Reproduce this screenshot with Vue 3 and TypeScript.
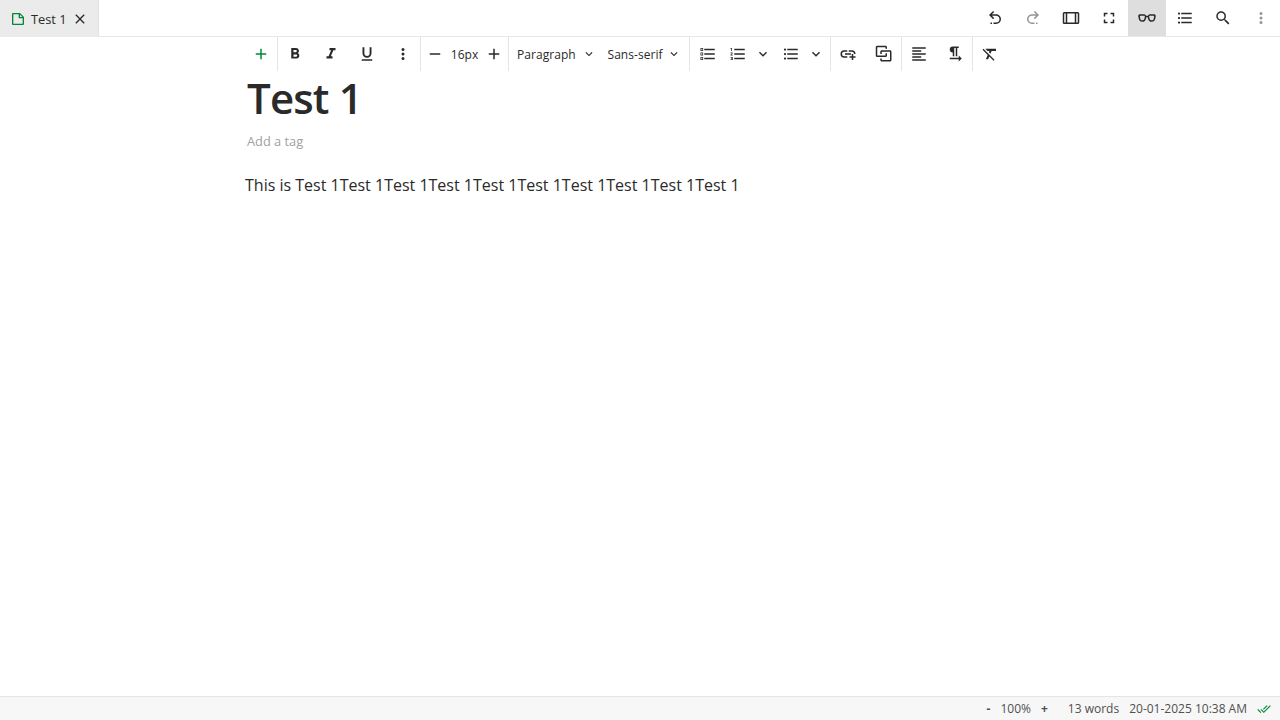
<script setup lang="ts">
import { defineComponent, h } from 'vue'

const icons: Record<string, string> = {
  note: 'M3,4.5A1.5,1.5 0 0,1 4.5,3H15L21,9V19.5A1.5,1.5 0 0,1 19.5,21H4.5A1.5,1.5 0 0,1 3,19.5V4.5M5,5V19H19V11H13V5H5M15,5.5V9H18.5L15,5.5Z',
  close: 'M19,6.41L17.59,5L12,10.59L6.41,5L5,6.41L10.59,12L5,17.59L6.41,19L12,13.41L17.59,19L19,17.59L13.41,12L19,6.41Z',
  undo: 'M13.5,7A6.5,6.5 0 0,1 20,13.5A6.5,6.5 0 0,1 13.5,20H10V18H13.5C16,18 18,16 18,13.5C18,11 16,9 13.5,9H7.83L10.91,12.09L9.5,13.5L4,8L9.5,2.5L10.92,3.91L7.83,7H13.5M6,18H8V20H6V18Z',
  redo: 'M10.5,7A6.5,6.5 0 0,0 4,13.5A6.5,6.5 0 0,0 10.5,20H14V18H10.5C8,18 6,16 6,13.5C6,11 8,9 10.5,9H16.17L13.09,12.09L14.5,13.5L20,8L14.5,2.5L13.08,3.91L16.17,7H10.5M18,18H16V20H18V18Z',
  width: 'M3,4H21A2,2 0 0,1 23,6V18A2,2 0 0,1 21,20H3A2,2 0 0,1 1,18V6A2,2 0 0,1 3,4M3,6V18H5V6H3M7,6V18H17V6H7M19,6V18H21V6H19Z',
  fullscreen: 'M5,5H10V7H7V10H5V5M14,5H19V10H17V7H14V5M17,14H19V19H14V17H17V14M10,17V19H5V14H7V17H10Z',
  glasses: 'M3,7C1.5,7 .3,7.8 .3,9.5L1,13C1.5,15.7 3,17 5.7,17C8.5,17 10,15.5 10.7,12.5L11,11.2C11.5,10.8 12.5,10.8 13,11.2L13.3,12.5C14,15.5 15.5,17 18.3,17C21,17 22.5,15.7 23,13L23.7,9.5C23.7,7.8 22.5,7 21,7H16.2C14.8,7 13.7,7.8 13.2,9C12.4,8.8 11.6,8.8 10.8,9C10.3,7.8 9.2,7 7.8,7H3M3.2,9H8C9,9 9.2,9.6 9.1,10.3L8.7,12.3C8.2,14.3 7.5,15 5.7,15C4,15 3.3,14.3 3,12.5L2.5,9.8C2.4,9.3 2.7,9 3.2,9M16,9H20.8C21.3,9 21.6,9.3 21.5,9.8L21,12.5C20.7,14.3 20,15 18.3,15C16.5,15 15.8,14.3 15.3,12.3L14.9,10.3C14.8,9.6 15,9 16,9Z',
  bullets: 'M7,5H21V7H7V5M7,13V11H21V13H7M4,4.5A1.5,1.5 0 0,1 5.5,6A1.5,1.5 0 0,1 4,7.5A1.5,1.5 0 0,1 2.5,6A1.5,1.5 0 0,1 4,4.5M4,10.5A1.5,1.5 0 0,1 5.5,12A1.5,1.5 0 0,1 4,13.5A1.5,1.5 0 0,1 2.5,12A1.5,1.5 0 0,1 4,10.5M7,19V17H21V19H7M4,16.5A1.5,1.5 0 0,1 5.5,18A1.5,1.5 0 0,1 4,19.5A1.5,1.5 0 0,1 2.5,18A1.5,1.5 0 0,1 4,16.5Z',
  search: 'M9.5,3A6.5,6.5 0 0,1 16,9.5C16,11.11 15.41,12.59 14.44,13.73L14.71,14H15.5L20.5,19L19,20.5L14,15.5V14.71L13.73,14.44C12.59,15.41 11.11,16 9.5,16A6.5,6.5 0 0,1 3,9.5A6.5,6.5 0 0,1 9.5,3M9.5,5C7,5 5,7 5,9.5C5,12 7,14 9.5,14C12,14 14,12 14,9.5C14,7 12,5 9.5,5Z',
  dots: 'M12,16A2,2 0 0,1 14,18A2,2 0 0,1 12,20A2,2 0 0,1 10,18A2,2 0 0,1 12,16M12,10A2,2 0 0,1 14,12A2,2 0 0,1 12,14A2,2 0 0,1 10,12A2,2 0 0,1 12,10M12,4A2,2 0 0,1 14,6A2,2 0 0,1 12,8A2,2 0 0,1 10,6A2,2 0 0,1 12,4Z',
  plus: 'M19,13H13V19H11V13H5V11H11V5H13V11H19V13Z',
  minus: 'M19,13H5V11H19V13Z',
  bold: 'M13.5,15.5H10V12.5H13.5A1.5,1.5 0 0,1 15,14A1.5,1.5 0 0,1 13.5,15.5M10,6.5H13A1.5,1.5 0 0,1 14.5,8A1.5,1.5 0 0,1 13,9.5H10M15.6,10.79C16.57,10.11 17.25,9 17.25,8C17.25,5.74 15.5,4 13.25,4H7V18H14.04C16.14,18 17.75,16.3 17.75,14.21C17.75,12.69 16.89,11.39 15.6,10.79Z',
  italic: 'M10,4V7H12.21L8.79,15H6V18H14V15H11.79L15.21,7H18V4H10Z',
  underline: 'M5,21H19V19H5V21M12,17A6,6 0 0,0 18,11V3H15.5V11A3.5,3.5 0 0,1 12,14.5A3.5,3.5 0 0,1 8.5,11V3H6V11A6,6 0 0,0 12,17Z',
  chevron: 'M7.41,8.58L12,13.17L16.59,8.58L18,10L12,16L6,10L7.41,8.58Z',
  checklist: 'M7,5H21V7H7V5M7,11H21V13H7V11M7,17H21V19H7V17M2,4H5.5V8H2V4M3,5V7H4.5V5H3M2,10H5.5V14H2V10M3,11V13H4.5V11H3M2,16H5.5V20H2V16M3,17V19H4.5V17H3Z',
  numbers: 'M7,13V11H21V13H7M7,19V17H21V19H7M7,7V5H21V7H7M3,8V5H2V4H4V8H3M2,17V16H5V20H2V19H4V18.5H3V17.5H4V17H2M4.25,10A0.75,0.75 0 0,1 5,10.75C5,10.95 4.92,11.14 4.79,11.27L3.12,13H5V14H2V13.08L4,11H2V10H4.25Z',
  link: 'M7,7H11V9H7A3,3 0 0,0 4,12A3,3 0 0,0 7,15H11V17H7A5,5 0 0,1 2,12A5,5 0 0,1 7,7M17,7A5,5 0 0,1 22,12H20A3,3 0 0,0 17,9H13V7H17M8,11H16V13H8V11M17,12H19V15H22V17H19V20H17V17H14V15H17V12Z',
  embed: 'M3,1C1.89,1 1,1.89 1,3V14C1,15.11 1.89,16 3,16H5V14H3V3H14V5H16V3C16,1.89 15.11,1 14,1H3M9,7C7.89,7 7,7.89 7,9V14C7,15.11 7.89,16 9,16H14C15.11,16 16,15.11 16,14V11H14V14H9V9H12V7H9M14,7V9H20V20H9V18H7V20C7,21.11 7.89,22 9,22H20C21.11,22 22,21.11 22,20V9C22,7.89 21.11,7 20,7H14Z',
  interlock: 'M3,1C1.89,1 1,1.89 1,3V14C1,15.11 1.89,16 3,16H14C15.11,16 16,15.11 16,14V11H14V14H3V3H14V5H16V3C16,1.89 15.11,1 14,1H3M9,7C7.89,7 7,7.89 7,9V12H9V9H20V20H9V18H7V20C7,21.11 7.89,22 9,22H20C21.11,22 22,21.11 22,20V9C22,7.89 21.11,7 20,7H9Z',
  align: 'M3,3H21V5H3V3M3,7H15V9H3V7M3,11H21V13H3V11M3,15H15V17H3V15M3,19H21V21H3V19Z',
  ltr: 'M21,18L17,14V17H5V19H17V22M9,10V15H11V4H13V15H15V4H17V2H9A4,4 0 0,0 5,6A4,4 0 0,0 9,10Z',
  clear: 'M6,5V5.18L8.82,8H11.22L10.5,9.68L12.6,11.78L14.21,8H20V5H6M3.27,5L2,6.27L8.97,13.24L6.5,19H9.5L11.07,15.34L16.73,21L18,19.73L3.55,5.27L3.27,5Z',
  checks: 'M0.41,13.41L6,19L7.41,17.58L1.83,12M22.24,5.58L11.66,16.17L7.5,12L6.07,13.41L11.66,19L23.66,7M18,7L16.59,5.58L10.24,11.93L11.66,13.34L18,7Z',
}

const evenOdd = ['glasses', 'width', 'note', 'checklist']

const Icon = defineComponent({
  props: { name: { type: String, required: true }, size: { type: Number, default: 18 } },
  setup: (p) => () =>
    h('svg', { width: p.size, height: p.size, viewBox: '0 0 24 24', fill: 'currentColor', 'fill-rule': evenOdd.includes(p.name) ? 'evenodd' : 'nonzero' }, [
      h('path', { d: icons[p.name] }),
    ]),
})

const actions = ['undo', 'redo', 'width', 'fullscreen', 'glasses', 'bullets', 'search', 'dots']
</script>

<template>
  <div class="app">
    <header class="topbar">
      <div class="tab">
        <Icon class="green" name="note" :size="16" />
        <span class="tab-title">Test 1</span>
        <Icon name="close" :size="16" />
      </div>
      <div class="actions">
        <button v-for="a in actions" :key="a" :class="['action', a]"><Icon :name="a" /></button>
      </div>
    </header>

    <nav class="toolbar">
      <div class="group first"><button class="tool green"><Icon name="plus" /></button></div>
      <div class="group marks">
        <button class="tool"><Icon name="bold" /></button>
        <button class="tool"><Icon name="italic" /></button>
        <button class="tool"><Icon name="underline" /></button>
        <button class="tool"><Icon name="dots" /></button>
      </div>
      <div class="group size">
        <button class="step"><Icon name="minus" /></button>
        <span class="size-value">16px</span>
        <button class="step"><Icon name="plus" /></button>
      </div>
      <div class="group selects">
        <button class="select para"><span>Paragraph</span><Icon name="chevron" :size="14" /></button>
        <button class="select font"><span>Sans-serif</span><Icon name="chevron" :size="14" /></button>
      </div>
      <div class="group lists">
        <button class="tool check"><Icon name="checklist" /></button>
        <button class="split"><Icon name="numbers" /></button>
        <button class="drop"><Icon name="chevron" :size="16" /></button>
        <button class="split"><Icon name="bullets" /></button>
        <button class="drop"><Icon name="chevron" :size="16" /></button>
      </div>
      <div class="group pair">
        <button class="tool"><Icon name="link" /></button>
        <button class="tool"><Icon name="interlock" /></button>
      </div>
      <div class="group pair">
        <button class="tool"><Icon name="align" /></button>
        <button class="tool"><Icon name="ltr" /></button>
      </div>
      <div class="group"><button class="tool"><Icon name="clear" /></button></div>
    </nav>

    <main class="editor">
      <h1>Test 1</h1>
      <div class="tag">Add a tag</div>
      <p>This is Test 1Test 1Test 1Test 1Test 1Test 1Test 1Test 1Test 1Test 1</p>
    </main>

    <footer class="status">
      <b class="zoom-out">-</b>
      <span class="zoom">100%</span>
      <b class="zoom-in">+</b>
      <span class="words">13 words</span>
      <span class="date">20-01-2025 10:38 AM</span>
      <Icon class="green" name="checks" :size="14" />
    </footer>
  </div>
</template>

<style>
body { margin: 0; }
</style>

<style scoped>
.app { width: 1280px; height: 720px; display: flex; flex-direction: column; background: #fff; color: #2a2a2a; font-family: "Open Sans", sans-serif; overflow: hidden; }
svg { display: block; flex: none; }
button { border: 0; padding: 0; margin: 0; background: none; color: inherit; font: inherit; display: flex; align-items: center; justify-content: center; flex: none; }
.green { color: #008837; }
.topbar { box-sizing: border-box; height: 37px; flex: none; display: flex; justify-content: space-between; border-bottom: 1px solid #e8e8e8; }
.tab { box-sizing: border-box; width: 99px; height: 37px; padding: 1px 0 0 10px; display: flex; align-items: center; background: #ebebeb; border-right: 1px solid #e3e3e3; }
.tab-title { width: 41px; margin-left: 5px; font-size: 12.8px; white-space: nowrap; }
.actions { display: flex; }
.action { width: 38px; height: 36px; }
.action.glasses { background: #dedede; }
.action.redo, .action.dots { color: #959595; }
.toolbar { height: 34px; flex: none; display: flex; padding-left: 245px; }
.group { box-sizing: border-box; display: flex; align-items: center; border-right: 1px solid #e5e5e5; }
.group:last-child { border-right: 0; }
.tool { width: 36px; height: 34px; margin-left: -1px; margin-right: 1px; }
.first { width: 33px; }
.first .tool { width: 32px; margin: 0; }
.marks { width: 143px; }
.size { width: 88px; padding-left: 5px; }
.step { width: 18px; }
.size-value { width: 41px; text-align: center; font-size: 12px; }
.selects { width: 181px; padding-left: 8px; font-size: 12px; }
.select { justify-content: flex-start; }
.select svg { margin-left: 5px; }
.para { width: 90px; }
.para svg { margin-left: 6px; }
.para span, .font span { letter-spacing: 0.05px; }
.font { padding-left: 0.5px; }
.font svg { margin-left: 4px; }
.lists { width: 141px; }
.check { margin: 0; }
.split { width: 26px; margin-left: -1px; }
.drop { width: 26px; margin-left: -1px; }
.lists .drop + .split { width: 29px; margin-left: 0; }
.lists .drop:last-child { margin-left: -2px; }
.pair { width: 71px; }
.editor { flex: 1; padding-left: 245px; }
h1 { margin: 0 0 0 2px; height: 55px; font-size: 42px; line-height: 54px; font-weight: 600; letter-spacing: -0.85px; }
.tag { margin: 6px 0 0 2px; font-size: 12.8px; line-height: 18px; color: #a0a0a0; }
p { margin: 23px 0 0; font-size: 16px; line-height: 24px; }
.status { box-sizing: border-box; height: 24px; flex: none; display: flex; align-items: center; padding-right: 9px; justify-content: flex-end; font-size: 12px; color: #505050; background: #f7f7f7; border-top: 1px solid #e5e5e5; white-space: nowrap; }
.zoom { margin-left: 10px; }
.zoom-in { margin-left: 10px; }
.words { margin-left: 20px; }
.date { margin: 0 10px; }
</style>
